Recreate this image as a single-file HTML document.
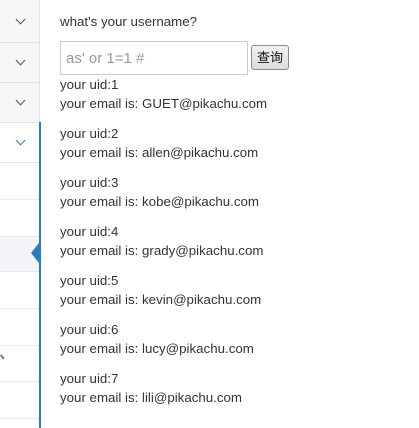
<!DOCTYPE html>
<html><head><meta charset="utf-8"><style>
*{margin:0;padding:0;box-sizing:border-box}
html,body{width:419px;height:428px;overflow:hidden;background:#fff;font-family:"Liberation Sans","Noto Sans CJK SC",sans-serif;color:#333;font-size:13.3px}
.side{position:absolute;left:0;top:0;width:39px;height:428px}
.r{position:absolute;left:0;width:39px;border-bottom:1px solid #e2e2e2;background:#f7f7f7}
.chev{position:absolute;left:17px;width:7px;height:7px;border-right:1.3px solid #555;border-bottom:1.3px solid #555;transform:rotate(45deg)}
.dot{position:absolute;left:0;width:39px;border-top:1px dotted #ddd}
.vline{position:absolute;left:39px;width:2px}
.t{position:absolute;left:60px;white-space:nowrap;line-height:19px}
input{position:absolute;left:60px;top:41px;width:188px;height:34px;border:1px solid #ccc;padding-left:5px;font:15px "Liberation Sans",sans-serif;color:#999}
.btn{position:absolute;left:251px;top:45px;width:38px;height:25px;border:1px solid #8a8a8a;border-radius:3px;background:linear-gradient(#f2f2f2,#dcdcdc);font-size:13px;text-align:center;line-height:23px;color:#111}
</style></head><body>
<div class="side">
<div class="r" style="top:0;height:43px"><div class="chev" style="top:16px"></div></div>
<div class="r" style="top:43px;height:40px"><div class="chev" style="top:14px"></div></div>
<div class="r" style="top:83px;height:40px"><div class="chev" style="top:14px"></div></div>
<div class="r" style="top:123px;height:40px;background:#fff"><div class="chev" style="top:14px;border-color:#2a7bc0"></div></div>
<div class="dot" style="top:199px"></div>
<div style="position:absolute;left:0;top:236px;width:39px;height:36px;background:#f3f5fa;border-top:1px dotted #ddd;border-bottom:1px dotted #ddd"></div>
<div class="dot" style="top:308px"></div>
<div class="dot" style="top:345px"></div>
<div class="dot" style="top:381px"></div>
<div class="dot" style="top:418px"></div>
<div style="position:absolute;left:0;top:356px;width:5px;height:1.5px;background:#777;transform:rotate(50deg)"></div>
<div style="position:absolute;left:31px;top:243px;width:0;height:0;border-top:10px solid transparent;border-bottom:10px solid transparent;border-right:8px solid #2a7bc0"></div>
</div>
<div class="vline" style="top:0;height:122px;background:#e0e0e0;width:1px"></div>
<div class="vline" style="top:122px;height:306px;background:#2a7bc0"></div>
<div class="t" style="top:12px">what's your username?</div>
<input value="as' or 1=1 #">
<div class="btn">查询</div>
<div class="t" style="top:75px">your uid:1</div>
<div class="t" style="top:94px">your email is: GUET@pikachu.com</div>
<div class="t" style="top:124px">your uid:2</div>
<div class="t" style="top:143px">your email is: allen@pikachu.com</div>
<div class="t" style="top:173px">your uid:3</div>
<div class="t" style="top:192px">your email is: kobe@pikachu.com</div>
<div class="t" style="top:222px">your uid:4</div>
<div class="t" style="top:241px">your email is: grady@pikachu.com</div>
<div class="t" style="top:271px">your uid:5</div>
<div class="t" style="top:290px">your email is: kevin@pikachu.com</div>
<div class="t" style="top:320px">your uid:6</div>
<div class="t" style="top:339px">your email is: lucy@pikachu.com</div>
<div class="t" style="top:369px">your uid:7</div>
<div class="t" style="top:388px">your email is: lili@pikachu.com</div>
</body></html>
